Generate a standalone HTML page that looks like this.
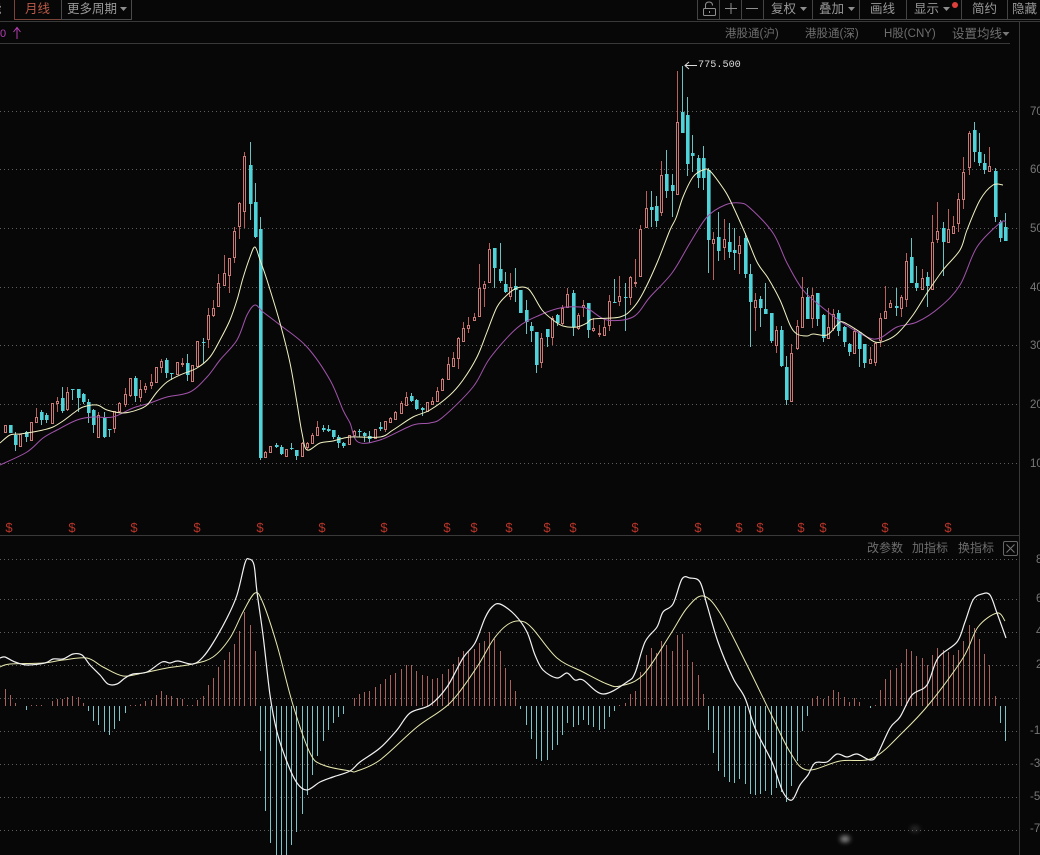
<!DOCTYPE html>
<html>
<head>
<meta charset="utf-8">
<style>
html,body{margin:0;padding:0;background:#070707;}
#p{position:relative;width:1040px;height:855px;overflow:hidden;background:#070707;font-family:"Liberation Sans","Noto Sans CJK SC",sans-serif;}
#p svg{position:absolute;left:0;top:0;}
.t{position:absolute;white-space:nowrap;line-height:16px;font-size:12.5px;color:#989898;}
.g{color:#6e6e6e;}
.y{position:absolute;white-space:nowrap;font-size:11.5px;line-height:14px;color:#787878;}
.s{position:absolute;top:521px;width:10px;text-align:center;font-size:13px;line-height:14px;color:#b8352a;}
</style>
</head>
<body>
<div id="p">
<svg id="c" width="1040" height="855" viewBox="0 0 1040 855" xmlns="http://www.w3.org/2000/svg">
<defs><filter id="b" x="-100%" y="-100%" width="300%" height="300%"><feGaussianBlur stdDeviation="2.5"/></filter></defs>
<g stroke="#393939" fill="none">
<path d="M0 21.5H1040M0 43.5H1010M0 535.5H1019M1019.5 21V855"/>
<path d="M14.5 0V19.5H61.5V0" stroke="#7a4438"/>
<path d="M61.5 0V19.5H131.5V0" stroke="#4a4a4a"/>
<path d="M697.5 0V19.5H1040M719.5 0V19M741.5 0V19M763.5 0V19M812.5 0V19M859.5 0V19M906.5 0V19M961.5 0V19M1007.5 0V19" stroke="#444"/>
</g>
<g stroke="#5e5e5e" stroke-dasharray="1 3" fill="none">
<path d="M0 111.5H1017M0 169.5H1017M0 228.5H1017M0 287.5H1017M0 345.5H1017M0 404.5H1017M0 463.5H1017"/>
<path d="M0 559.5H1017M0 599.5H1017M0 632.5H1017M0 665.5H1017M0 698.5H1017M0 731.5H1017M0 764.5H1017M0 797.5H1017M0 830.5H1017"/>
</g>
<g id="chart"></g>
<ellipse cx="845" cy="839" rx="5" ry="3.5" fill="#fff" opacity=".5" filter="url(#b)"/>
<ellipse cx="915" cy="829" rx="5" ry="3.5" fill="#888" opacity=".25" filter="url(#b)"/>
<!-- toolbar icons -->
<g fill="none" stroke="#8e8e8e">
<rect x="703.5" y="8.5" width="12" height="7" rx="1"/>
<path d="M705.5 8V5.5C705.5 3 707 2 709 2S712.5 3 712.5 5.5"/>
<path d="M709.5 11V13"/>
<path d="M725 8.500H737M731 3V14"/>
<path d="M746 8.500H758"/>
</g>
<g fill="#8e8e8e">
<path d="M800 7h7l-3.500 4z"/>
<path d="M848 7h7l-3.500 4z"/>
<path d="M943 7h7l-3.500 4z"/>
<path d="M120 7h7l-3.500 4z"/>
<path d="M1002.500 32h7l-3.500 4z" fill="#777"/>
</g>
<circle cx="955" cy="5" r="3" fill="#e0403c"/>
<!-- magenta arrow -->
<path d="M17 39V28M13.500 32L17 27.500L20.500 32" fill="none" stroke="#b43eb0"/>
<!-- high-price arrow -->
<path d="M697 65.500H685M689 62L685 65.500L689 69" fill="none" stroke="#ddd"/>
<!-- close box -->
<rect x="1003.500" y="541.500" width="14" height="14" rx="1.500" fill="none" stroke="#666"/>
<path d="M1006.500 544.500L1014.500 552.500M1014.500 544.500L1006.500 552.500" stroke="#777" fill="none"/>
</svg>

<div class="t" style="left:-11px;top:1px;">能</div>
<div class="t" style="left:25px;top:1px;color:#bb5a48;">月线</div>
<div class="t" style="left:67px;top:1px;">更多周期</div>
<div class="t" style="left:771px;top:1px;">复权</div>
<div class="t" style="left:819px;top:1px;">叠加</div>
<div class="t" style="left:870px;top:1px;">画线</div>
<div class="t" style="left:914px;top:1px;">显示</div>
<div class="t" style="left:972px;top:1px;">简约</div>
<div class="t" style="left:1012px;top:1px;">隐藏</div>

<div class="t" style="left:0;top:26px;color:#b43eb0;font-size:11px;">0</div>
<div class="t g" style="left:725px;top:26px;font-size:11.5px;">港股通(沪)</div>
<div class="t g" style="left:805px;top:26px;font-size:11.5px;">港股通(深)</div>
<div class="t g" style="left:884px;top:26px;font-size:11.5px;">H股(CNY)</div>
<div class="t g" style="left:952px;top:26px;">设置均线</div>

<div class="t" style="left:698px;top:58px;color:#d8d8d8;font-family:'Liberation Mono',monospace;font-size:10.2px;">775.500</div>

<div class="y" style="left:1030px;top:105px;">70</div>
<div class="y" style="left:1030px;top:163px;">60</div>
<div class="y" style="left:1030px;top:222px;">50</div>
<div class="y" style="left:1030px;top:281px;">40</div>
<div class="y" style="left:1030px;top:339px;">30</div>
<div class="y" style="left:1030px;top:398px;">20</div>
<div class="y" style="left:1030px;top:457px;">10</div>

<div class="y" style="left:1036px;top:553px;">8</div>
<div class="y" style="left:1036px;top:592px;">6</div>
<div class="y" style="left:1036px;top:625px;">4</div>
<div class="y" style="left:1036px;top:658px;">2</div>
<div class="y" style="left:1030px;top:724px;">-1</div>
<div class="y" style="left:1030px;top:757px;">-3</div>
<div class="y" style="left:1030px;top:790px;">-5</div>
<div class="y" style="left:1030px;top:822px;">-7</div>

<div class="t g" style="left:867px;top:540px;font-size:12px;">改参数</div>
<div class="t g" style="left:912px;top:540px;font-size:12px;">加指标</div>
<div class="t g" style="left:958px;top:540px;font-size:12px;">换指标</div>

<div class="s" style="left:4px;">$</div><div class="s" style="left:67px;">$</div><div class="s" style="left:129px;">$</div><div class="s" style="left:192px;">$</div><div class="s" style="left:255px;">$</div><div class="s" style="left:317px;">$</div><div class="s" style="left:379px;">$</div><div class="s" style="left:442px;">$</div><div class="s" style="left:469px;">$</div><div class="s" style="left:504px;">$</div><div class="s" style="left:542px;">$</div><div class="s" style="left:568px;">$</div><div class="s" style="left:630px;">$</div><div class="s" style="left:693px;">$</div><div class="s" style="left:734px;">$</div><div class="s" style="left:755px;">$</div><div class="s" style="left:796px;">$</div><div class="s" style="left:818px;">$</div><div class="s" style="left:880px;">$</div><div class="s" style="left:943px;">$</div>

<script>
var K="R425 432 425 432|C425 433 425 433|C435 445 432 451|R434 446 434 446|C432 437 431 442|R422 440 422 440|R417 422 408 423|C412 420 410 425|C415 420 413 423|R403 423 403 423|R401 403 397 412|C398 411 387 413|R392 409 387 411|C389 390 389 400|C389 398 389 412|C394 402 393 404|C402 413 399 423|C410 425 409 433|R415 437 412 438|C418 437 412 438|C429 430 429 437|R411 428 411 433|R403 411 402 413|R394 404 388 407|R378 395 378 397|C378 396 376 402|R389 397 380 402|R386 389 383 393|R382 385 374 389|R367 382 367 382|R361 367 359 373|C360 373 358 378|C373 374 373 380|R362 374 362 374|R363 364 358 367|C363 375 354 381|R365 381 365 381|R341 366 341 366|C342 343 338 363|R315 339 308 348|R308 315 300 317|R283 306 274 307|R273 285 255 285|R258 275 258 293|R231 257 227 263|R203 226 202 239|R156 211 152 228|C165 204 142 220|C202 237 183 238|C229 458 217 460|R452 457 451 458|R446 452 446 452|C445 447 443 448|C447 454 445 455|R449 456 449 456|C448 449 443 450|C450 456 450 460|R443 456 442 457|R443 447 442 450|R435 443 433 443|R427 435 421 435|C428 430 425 432|C429 431 425 432|C430 437 430 439|C437 443 435 448|C443 446 442 448|R435 444 435 444|R431 435 430 435|C431 432 429 437|C433 436 432 442|C436 439 431 443|R429 438 429 438|C427 429 422 431|R421 429 421 432|R418 422 417 423|R412 419 411 420|R403 413 401 414|R397 405 392 405|C396 401 393 402|C400 409 399 410|C408 410 407 416|R402 411 402 411|R401 404 397 405|R391 401 387 402|R379 390 378 391|R364 379 357 380|R358 366 352 367|R338 358 337 369|R328 341 322 342|R325 328 317 333|R317 320 313 321|R288 316 264 316|R284 288 281 307|R249 282 243 283|C248 268 248 288|C269 281 243 283|C284 292 272 293|R287 296 273 300|C286 290 268 302|C290 313 290 313|C310 322 300 334|C326 331 322 342|C332 365 332 373|R338 362 333 368|C329 337 329 347|R318 337 316 345|C315 323 314 326|R308 323 305 325|R294 307 288 308|C293 327 290 336|R315 328 313 330|R305 307 300 317|C303 330 303 338|R328 330 318 332|R333 334 325 337|R327 335 320 335|R301 325 295 331|C302 303 279 303|R296 301 276 306|C297 298 283 331|R277 297 276 305|R282 283 259 287|R229 276 225 276|R208 227 191 227|C207 210 191 227|C206 221 196 227|R175 212 161 216|C174 191 150 198|C185 191 174 217|R122 194 71 194|C112 133 66 133|C115 164 97 176|C153 156 135 172|C158 178 155 188|C158 178 146 190|C170 240 168 273|R239 243 232 280|C237 251 212 261|R239 247 219 260|C242 252 223 258|C250 253 228 270|R245 253 236 274|C238 274 233 278|C274 302 264 347|R300 307 293 331|C299 308 296 327|C309 314 283 314|C313 341 313 343|R330 345 326 353|C330 366 326 367|C367 400 356 405|R353 401 344 401|R326 348 320 350|R297 327 277 328|C297 319 288 319|R295 318 288 328|C293 319 293 326|C315 338 314 342|R327 338 308 339|R314 328 309 331|C313 331 310 336|C327 342 326 347|C344 352 343 356|R331 353 328 354|C332 349 332 367|C344 363 344 368|R359 363 347 364|R343 362 342 366|R318 340 313 347|R311 318 286 318|R303 307 300 307|C306 308 288 316|R297 308 295 317|R261 299 253 307|C257 283 238 283|C283 288 266 291|R278 289 269 290|C277 286 272 307|R242 289 215 289|R231 239 202 243|C228 242 222 276|R229 242 209 242|R226 233 216 233|R199 223 193 232|R172 199 157 209|R133 167 131 175|C130 152 122 162|C152 163 133 166|C163 170 154 174|R166 171 147 172|C171 217 168 222|C222 238 220 242|C227 241 213 241".split("|");
var H=[17,11,3,0,-4,1,1,1,0,5,7,7,9,10,9,3,-5,-15,-19,-26,-29,-23,-15,-7,1,1,2,5,6,11,15,11,10,8,7,1,1,6,10,21,28,39,46,54,62,75,94,81,55,-45,-105,-137,-155,-155,-155,-139,-126,-108,-89,-69,-50,-35,-24,-17,-11,-8,0,8,12,14,15,19,22,27,31,33,37,41,41,35,31,30,27,28,32,37,42,49,55,55,57,63,65,74,67,55,38,26,15,-3,-19,-33,-53,-55,-54,-44,-39,-29,-17,-21,-19,-14,-19,-21,-24,-23,-11,-5,1,3,12,15,34,51,58,53,65,61,55,71,72,56,44,31,12,-24,-47,-65,-71,-76,-77,-73,-78,-88,-89,-88,-85,-89,-82,-86,-96,-80,-55,-25,-10,8,10,7,10,16,14,9,4,8,4,0,-2,1,16,27,36,38,43,57,55,50,48,41,51,58,56,54,51,56,65,81,78,67,52,41,10,-17,-35];
var MA5="0,443 10,435 20,434 33,432 43,430 53,427 63,421 75,412 83,407 97,405 107,410 123,413 137,410 147,405 157,392 167,382 180,375 197,368 210,357 220,340 230,320 237,300 243,278 250,257 255,247 260,260 267,280 280,323 290,363 297,403 302,433 307,450 320,443 333,441 350,437 380,437 393,430 413,417 430,410 450,395 463,380 477,357 487,332 497,307 507,295 517,288 527,288 533,295 542,310 553,320 563,326 577,327 587,323 593,319 620,317 633,308 643,293 657,263 670,230 676,218 683,197 693,177 703,170 710,171 723,188 730,200 745,233 757,262 768,278 780,300 790,325 797,334 807,336 813,334 827,335 837,325 843,322 860,332 875,342 887,340 898,333 913,315 927,293 943,270 960,250 967,230 980,200 993,185 1003,185";
var MA10="0,465 27,452 43,438 57,430 77,420 93,417 113,417 133,408 150,403 167,397 190,392 207,377 220,360 237,340 247,315 255,305 263,312 280,325 307,347 330,380 343,410 350,423 358,442 380,440 413,425 430,423 443,417 473,387 490,358 517,328 540,315 560,308 580,307 590,310 607,320 633,317 650,297 672,273 690,243 707,217 725,205 740,203 750,208 773,233 787,263 803,290 823,308 843,323 867,337 880,338 897,327 917,322 940,307 960,285 977,247 1000,223 1006,222";
var DIF="0,658 5,657 15,662 27,665 45,663 53,659 63,659 73,654 82,655 90,665 100,675 108,684 117,684 125,678 133,674 147,672 162,662 170,663 178,661 193,664 203,657 213,643 227,618 237,595 245,563 249,559 254,565 257,592 263,635 270,695 277,732 287,762 297,783 307,790 320,782 333,777 350,771 360,762 380,748 397,730 410,713 430,705 447,687 463,658 475,643 485,618 492,607 500,604 515,615 527,632 535,655 543,670 557,678 567,673 575,680 583,680 603,694 627,682 635,673 645,642 657,627 663,612 673,604 682,579 690,578 700,582 707,605 718,642 733,678 745,698 755,728 772,762 783,792 792,800 800,785 808,775 815,763 827,762 837,754 847,757 857,754 870,760 877,755 890,728 900,717 912,695 927,685 938,658 957,642 965,622 973,600 982,594 990,595 997,613 1006,638";
var DEA="0,667 10,664 43,663 63,660 87,658 103,667 123,676 143,673 167,668 193,664 213,657 230,638 243,612 255,593 263,603 277,645 293,705 310,753 323,765 350,771 357,771 380,760 417,727 450,703 477,667 493,640 507,625 520,621 532,628 557,658 583,672 607,684 620,686 643,675 670,635 687,608 703,596 720,613 747,665 770,712 790,752 807,770 840,761 873,758 903,732 930,703 963,658 978,627 997,613 1005,621";
function smooth(s){
 var p=s.split(" ").map(function(q){return q.split(",").map(Number);}),d="M"+p[0][0]+" "+p[0][1];
 for(var i=0;i<p.length-1;i++){
  var a=p[i-1]||p[i],b=p[i],c=p[i+1],e=p[i+2]||c;
  d+="C"+(b[0]+(c[0]-a[0])/6).toFixed(1)+" "+(b[1]+(c[1]-a[1])/6).toFixed(1)+" "+(c[0]-(e[0]-b[0])/6).toFixed(1)+" "+(c[1]-(e[1]-b[1])/6).toFixed(1)+" "+c[0]+" "+c[1];
 }
 return d;
}
var rw="",cw="",rb="",cb="",rh="",ch="";
K.forEach(function(s,i){
 var X=Math.round(4.7+5.21*i),col=s[0],a=s.slice(1).split(" ").map(Number),t=a[0],b=a[1],wt=a[2],wb=a[3],x=X+.5;
 var w="M"+x+" "+wt+"V"+t+"M"+x+" "+b+"V"+wb;
 if(col=="R"){rw+=w;rb+="M"+(X-.5)+" "+(t+.5)+"H"+(X+1.5)+"V"+(b+.5)+"H"+(X-.5)+"Z";}
 else{cw+=w;cb+="M"+(X-1)+" "+t+"H"+(X+2.6)+"V"+b+"H"+(X-1)+"Z";}
});
H.forEach(function(h,i){
 if(!h)return;
 var x=Math.round(4.7+5.21*i)+.5;
 if(h>0)rh+="M"+x+" 706V"+(706-h);
 else ch+="M"+x+" 706V"+(706-h);
});
var C=document.getElementById("chart"),o="";
o+='<path d="'+rh+'" stroke="#a8625e" fill="none"/>';
o+='<path d="'+ch+'" stroke="#7cc4c8" fill="none"/>';
o+='<path d="'+rw+'" stroke="#b8605c" fill="none"/>';
o+='<path d="'+cw+'" stroke="#6cc0c0" fill="none"/>';
o+='<path d="'+rb+'" stroke="#c87a76" fill="#100606"/>';
o+='<path d="'+cb+'" fill="#4fd2d8"/>';
o+='<path d="'+smooth(MA10)+'" fill="none" stroke="#a254ac"/>';
o+='<path d="'+smooth(MA5)+'" fill="none" stroke="#f2f2c4"/>';
o+='<path d="'+smooth(DEA)+'" fill="none" stroke="#e8e8b0"/>';
o+='<path d="'+smooth(DIF)+'" fill="none" stroke="#f2f2f2" stroke-width="1.2"/>';
C.innerHTML=o;
</script>
</div>
</body>
</html>
